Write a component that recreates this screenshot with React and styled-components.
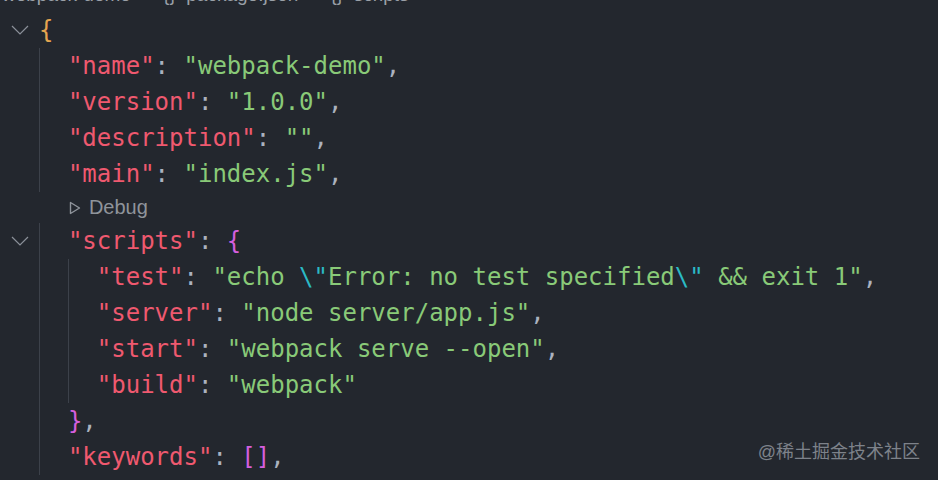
import styled, { createGlobalStyle } from "styled-components";

const GlobalStyle = createGlobalStyle`
  html, body {
    margin: 0;
    padding: 0;
    background: #23272e;
  }
`;

const colors = {
  key: "#ef596f",
  str: "#89ca78",
  esc: "#2bbac5",
  gold: "#e5a550",
  purple: "#d55fde",
  punct: "#abb2bf",
};

const Editor = styled.div`
  position: relative;
  width: 938px;
  height: 480px;
  overflow: hidden;
  background: #23272e;
  font-family: "DejaVu Sans Mono", "Liberation Mono", monospace;
  font-size: 24px;
`;

const Breadcrumb = styled.div`
  height: 12px;
  overflow: hidden;
`;

const CrumbText = styled.div`
  font-family: "Liberation Sans", "Noto Sans", sans-serif;
  font-size: 19px;
  line-height: 19px;
  color: #9aa0a8;
  margin-top: -15px;
  padding-left: 2px;
  white-space: pre;
`;

const Row = styled.div`
  display: flex;
  align-items: stretch;
  height: ${(p) => (p.$lens ? 31 : 36)}px;
  white-space: pre;
`;

const Gutter = styled.div`
  width: 39px;
  flex: none;
  display: flex;
  align-items: center;
  justify-content: center;
  color: #8b9099;
`;

const Guide = styled.span`
  width: 2ch;
  flex: none;
  box-sizing: border-box;
  border-left: 1px solid ${(p) => (p.$hidden ? "transparent" : "#3c414a")};
`;

const Code = styled.span`
  display: flex;
  align-items: center;
  line-height: 36px;
`;

const Tok = styled.span`
  color: ${(p) => colors[p.$c] || colors.punct};
`;

const Lens = styled.span`
  display: flex;
  align-items: center;
  gap: 8px;
  font-family: "Liberation Sans", "Noto Sans", sans-serif;
  font-size: 20px;
  color: #8f949b;
  padding-left: 1px;
`;

const Watermark = styled.div`
  position: absolute;
  right: 18px;
  bottom: 17px;
  font-family: "Liberation Sans", "Noto Sans CJK SC", sans-serif;
  font-size: 18px;
  color: #7d828a;
`;

const Chevron = () => (
  <svg width="20" height="12" viewBox="0 0 20 12" fill="none">
    <path d="M2 2 L10 10 L18 2" stroke="currentColor" strokeWidth="1.2" />
  </svg>
);

const Play = () => (
  <svg width="12" height="14" viewBox="0 0 12 14" fill="none">
    <path d="M1.5 1.5 L10.5 7 L1.5 12.5 Z" stroke="currentColor" strokeWidth="1.4" strokeLinejoin="round" />
  </svg>
);

const K = ({ children }) => <Tok $c="key">"{children}"</Tok>;
const S = ({ children }) => <Tok $c="str">{children}</Tok>;
const P = ({ children }) => <Tok $c="punct">{children}</Tok>;

const Line = ({ fold, depth = 0, children }) => (
  <Row>
    <Gutter>{fold && <Chevron />}</Gutter>
    {Array.from({ length: depth }).map((_, i) => (
      <Guide key={i} />
    ))}
    <Code>{children}</Code>
  </Row>
);

const Pair = ({ depth, name, value, comma = true }) => (
  <Line depth={depth}>
    <K>{name}</K>
    <P>: </P>
    <S>"{value}"</S>
    {comma && <P>,</P>}
  </Line>
);

export default function App() {
  return (
    <Editor>
      <GlobalStyle />
      <Breadcrumb>
        <CrumbText>{"webpack-demo  >  {}  package.json  >  {}  scripts"}</CrumbText>
      </Breadcrumb>
      <Line fold>
        <Tok $c="gold">{"{"}</Tok>
      </Line>
      <Pair depth={1} name="name" value="webpack-demo" />
      <Pair depth={1} name="version" value="1.0.0" />
      <Pair depth={1} name="description" value="" />
      <Pair depth={1} name="main" value="index.js" />
      <Row $lens>
        <Gutter />
        <Guide $hidden />
        <Lens>
          <Play />
          Debug
        </Lens>
      </Row>
      <Line fold depth={1}>
        <K>scripts</K>
        <P>: </P>
        <Tok $c="purple">{"{"}</Tok>
      </Line>
      <Line depth={2}>
        <K>test</K>
        <P>: </P>
        <S>"echo </S>
        <Tok $c="esc">\"</Tok>
        <S>Error: no test specified</S>
        <Tok $c="esc">\"</Tok>
        <S>{' && exit 1"'}</S>
        <P>,</P>
      </Line>
      <Pair depth={2} name="server" value="node server/app.js" />
      <Pair depth={2} name="start" value="webpack serve --open" />
      <Pair depth={2} name="build" value="webpack" comma={false} />
      <Line depth={1}>
        <Tok $c="purple">{"}"}</Tok>
        <P>,</P>
      </Line>
      <Line depth={1}>
        <K>keywords</K>
        <P>: </P>
        <Tok $c="purple">[]</Tok>
        <P>,</P>
      </Line>
      <Watermark>@稀土掘金技术社区</Watermark>
    </Editor>
  );
}
